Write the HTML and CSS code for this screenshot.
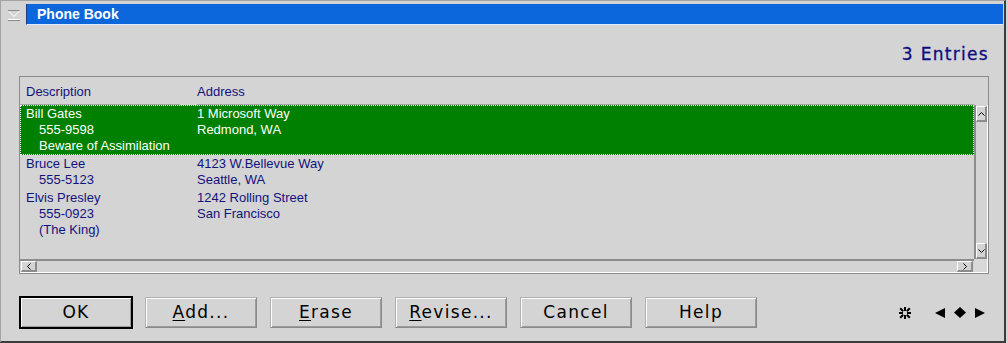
FILE: index.html
```html
<!DOCTYPE html>
<html lang="en">
  <head>
    <meta charset="UTF-8" />
    <title>Phone Book</title>
    <link rel="stylesheet" href="styles.css">
  </head>
  <body>
    <div class="window">
      <div class="titlebar">
        <div class="menu-btn">
          <svg width="14" height="14" viewBox="0 0 14 14">
            <polyline points="1,2.5 12.5,2.5" stroke="#8a8a8a" fill="none" />
            <polyline points="1.5,3 7,8.5 12.5,3" stroke="#ffffff" fill="none" />
            <line x1="1" y1="11.5" x2="13" y2="11.5" stroke="#ffffff" />
            <line x1="1" y1="12.5" x2="13" y2="12.5" stroke="#8a8a8a" />
          </svg>
        </div>
        <div class="title">Phone Book</div>
      </div>

      <div class="count">3 Entries</div>

      <div class="listbox">
        <div class="list-header">
          <div class="head-desc">Description</div>
          <div class="head-addr">Address</div>
        </div>

        <div class="list-body">
          <div class="entry selected">
            <div class="col-desc">
              <div>Bill Gates</div>
              <div class="sub">555-9598</div>
              <div class="sub">Beware of Assimilation</div>
            </div>
            <div class="col-addr">
              <div>1 Microsoft Way</div>
              <div>Redmond, WA</div>
            </div>
          </div>
          <div class="entry">
            <div class="col-desc">
              <div>Bruce Lee</div>
              <div class="sub">555-5123</div>
            </div>
            <div class="col-addr">
              <div>4123 W.Bellevue Way</div>
              <div>Seattle, WA</div>
            </div>
          </div>
          <div class="entry">
            <div class="col-desc">
              <div>Elvis Presley</div>
              <div class="sub">555-0923</div>
              <div class="sub">(The King)</div>
            </div>
            <div class="col-addr">
              <div>1242 Rolling Street</div>
              <div>San Francisco</div>
            </div>
          </div>
        </div>

        <div class="vscroll">
          <div class="scroll-btn vbtn">
            <svg width="7" height="4" viewBox="0 0 7 4"><polyline points="0.5,3.5 3.5,0.5 6.5,3.5" stroke="#000" fill="none" /></svg>
          </div>
          <div class="scroll-btn vbtn">
            <svg width="7" height="4" viewBox="0 0 7 4"><polyline points="0.5,0.5 3.5,3.5 6.5,0.5" stroke="#000" fill="none" /></svg>
          </div>
        </div>

        <div class="hscroll">
          <div class="scroll-btn hbtn">
            <svg width="4" height="7" viewBox="0 0 4 7"><polyline points="3.5,0.5 0.5,3.5 3.5,6.5" stroke="#000" fill="none" /></svg>
          </div>
          <div class="scroll-btn hbtn">
            <svg width="4" height="7" viewBox="0 0 4 7"><polyline points="0.5,0.5 3.5,3.5 0.5,6.5" stroke="#000" fill="none" /></svg>
          </div>
        </div>

        <div class="corner"></div>
      </div>

      <div class="footer">
        <button class="btn btn-default">OK</button>
        <button class="btn"><u>A</u>dd...</button>
        <button class="btn"><u>E</u>rase</button>
        <button class="btn"><u>R</u>evise...</button>
        <button class="btn">Cancel</button>
        <button class="btn">Help</button>

        <div class="status-icons">
          <svg class="star" width="12" height="12" viewBox="0 0 12 12">
            <g stroke="#000" stroke-width="2">
              <line x1="6" y1="0" x2="6" y2="4" />
              <line x1="6" y1="8" x2="6" y2="12" />
              <line x1="0" y1="6" x2="4" y2="6" />
              <line x1="8" y1="6" x2="12" y2="6" />
              <line x1="1.2" y1="1.2" x2="4.2" y2="4.2" />
              <line x1="7.8" y1="7.8" x2="10.8" y2="10.8" />
              <line x1="10.8" y1="1.2" x2="7.8" y2="4.2" />
              <line x1="4.2" y1="7.8" x2="1.2" y2="10.8" />
            </g>
          </svg>
          <div class="nav">
            <svg width="10" height="10" viewBox="0 0 10 10"><polygon points="0,5 10,0 10,10" fill="#000" /></svg>
            <svg width="12" height="11" viewBox="0 0 12 11"><polygon points="6,0 12,5.5 6,11 0,5.5" fill="#000" /></svg>
            <svg width="10" height="10" viewBox="0 0 10 10"><polygon points="10,5 0,0 0,10" fill="#000" /></svg>
          </div>
        </div>
      </div>
    </div>
  </body>
</html>
```

FILE: styles.css
```css
body {
  margin: 0;
  background-color: #d4d4d4;
  font-family: "Liberation Sans", Arial, sans-serif;
}

.window {
  width: 1006px;
  height: 343px;
  box-sizing: border-box;
  border-top: 1px solid #a4a4a4;
  border-left: 1px solid #a4a4a4;
  border-right: 2px solid #3c3c3c;
  border-bottom: 2px solid #3c3c3c;
  background: #d4d4d4;
  display: flex;
  flex-direction: column;
}

/* title bar */

.titlebar {
  display: flex;
  height: 25px;
}

.menu-btn {
  width: 25px;
  display: flex;
  justify-content: center;
  padding-top: 7px;
  box-sizing: border-box;
}

.title {
  flex: 1;
  margin: 3px 1px 0 0;
  height: 20px;
  line-height: 20px;
  background: #0c66dc;
  border-left: 1px solid #23407a;
  border-bottom: 1px solid #dfeaff;
  padding-left: 10px;
  color: white;
  font-weight: bold;
  font-size: 14px;
}

.count {
  margin-top: 18px;
  height: 20px;
  line-height: 20px;
  text-align: right;
  padding-right: 15px;
  font-family: "DejaVu Sans", sans-serif;
  font-size: 17px;
  letter-spacing: 1.3px;
  color: #0c0c80;
  -webkit-text-stroke: 0.3px #0c0c80;
}

/* list box */

.listbox {
  margin: 12px 0 0 18px;
  width: 970px;
  height: 198px;
  box-sizing: border-box;
  border: 1px solid #8c8c8c;
  display: grid;
  grid-template-columns: 1fr 14px;
  grid-template-rows: 28px 154px 14px;
  font-size: 13px;
  line-height: 16px;
  color: #12127e;
}

.list-header {
  grid-column: 1 / 3;
  display: flex;
}

.head-desc,
.head-addr {
  border-bottom: 1px solid #a6a6a6;
  padding-top: 7px;
  box-sizing: border-box;
}

.head-desc {
  width: 160px;
  padding-left: 6px;
  margin-right: 17px;
}

.head-addr {
  flex: 1;
  margin-right: 14px;
}

.list-body {
  overflow: hidden;
}

.entry {
  display: flex;
  border: 1px solid transparent;
}

.entry.selected {
  background: #008000;
  color: white;
  border: 1px dotted #ffffff;
}

.col-desc {
  width: 171px;
  padding-left: 5px;
}

.sub {
  padding-left: 13px;
}

.vscroll {
  border-left: 2px solid #8c8c8c;
  border-right: 1px solid #ffffff;
  display: flex;
  flex-direction: column;
  justify-content: space-between;
  padding-top: 1px;
}

.hscroll {
  border-top: 2px solid #8c8c8c;
  border-bottom: 1px solid #ffffff;
  display: flex;
  justify-content: space-between;
  padding: 0 1px 0 1px;
}

.corner {
  background: #d9d9d9;
  border-right: 1px solid #ffffff;
  border-bottom: 1px solid #ffffff;
}

.scroll-btn {
  box-sizing: border-box;
  background: #d4d4d4;
  border-top: 1px solid #ffffff;
  border-left: 1px solid #ffffff;
  border-right: 2px solid #8c8c8c;
  border-bottom: 2px solid #8c8c8c;
  display: flex;
  align-items: center;
  justify-content: center;
}

.vbtn {
  width: 11px;
  height: 16px;
}

.hbtn {
  width: 16px;
  height: 11px;
}

/* buttons */

.footer {
  margin-top: 23px;
  padding: 0 19px;
  display: flex;
  align-items: center;
  gap: 13px;
}

.btn {
  width: 112px;
  height: 31px;
  padding: 0 0 2px 0;
  background: #d4d4d4;
  border: 1px solid #8a8a8a;
  border-top-color: #b0b0b0;
  border-left-color: #b0b0b0;
  box-shadow: inset 1px 1px #ffffff, inset -1px -1px #9c9c9c;
  font-family: "DejaVu Sans", sans-serif;
  font-size: 17px;
  letter-spacing: 1.3px;
  color: #000;
}

.btn u {
  text-underline-offset: 2px;
}

.btn-default {
  border: 1px solid #000;
  outline: 1px solid #000;
}

.status-icons {
  margin-left: auto;
  display: flex;
  align-items: center;
  gap: 24px;
}

.star {
  margin-top: 1px;
}

.nav {
  display: flex;
  align-items: center;
  gap: 9px;
}
```
